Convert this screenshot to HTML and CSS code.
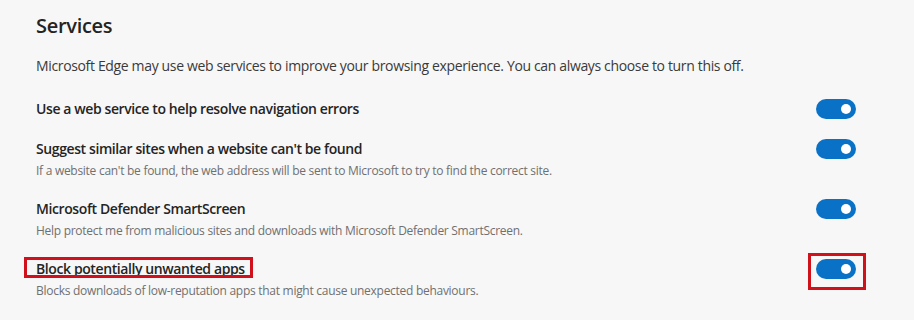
FILE: index.html
```html
<!DOCTYPE html>
<html lang="en">
<head>
<meta charset="utf-8">
<title>Services</title>
<link rel="stylesheet" href="styles.css">
</head>
<body>
<main class="page">
  <h1 class="heading">Services</h1>
  <p class="intro">Microsoft Edge may use web services to improve your browsing experience. You can always choose to turn this off.</p>

  <div class="row">
    <div class="text">
      <div class="title">Use a web service to help resolve navigation errors</div>
    </div>
    <span class="toggle"><span class="knob"></span></span>
  </div>

  <div class="row">
    <div class="text">
      <div class="title">Suggest similar sites when a website can't be found</div>
      <div class="desc">If a website can't be found, the web address will be sent to Microsoft to try to find the correct site.</div>
    </div>
    <span class="toggle"><span class="knob"></span></span>
  </div>

  <div class="row">
    <div class="text">
      <div class="title">Microsoft Defender SmartScreen</div>
      <div class="desc">Help protect me from malicious sites and downloads with Microsoft Defender SmartScreen.</div>
    </div>
    <span class="toggle"><span class="knob"></span></span>
  </div>

  <div class="row">
    <div class="text">
      <div class="title"><span class="mark mark-title">Block potentially unwanted apps</span></div>
      <div class="desc">Blocks downloads of low-reputation apps that might cause unexpected behaviours.</div>
    </div>
    <span class="toggle mark mark-toggle"><span class="knob"></span></span>
  </div>
</main>
</body>
</html>
```

FILE: styles.css
```css
html, body {
  margin: 0;
  padding: 0;
  background: #f7f7f7;
}

body {
  font-family: "Open Sans", "Noto Sans", sans-serif;
  color: #242424;
  width: 914px;
  height: 320px;
  overflow: hidden;
}

.page {
  padding: 12px 58px 0 36px;
}

.heading {
  margin: 0;
  font-size: 20px;
  line-height: 28px;
  font-weight: 600;
  color: #242424;
  letter-spacing: -0.3px;
}

.intro {
  margin: 16px 0 13px;
  font-size: 14px;
  line-height: 20px;
  color: #3a3a3a;
  letter-spacing: -0.35px;
}

.row {
  display: flex;
  justify-content: space-between;
  align-items: flex-start;
  padding: 10px 0 10px;
}

.row:has(.desc) {
  padding-bottom: 7px;
}

.title {
  font-size: 14px;
  line-height: 20px;
  font-weight: 600;
  color: #242424;
  letter-spacing: -0.4px;
}

.desc {
  margin-top: 1px;
  font-size: 12px;
  line-height: 22px;
  color: #707070;
  letter-spacing: -0.28px;
}

.toggle {
  position: relative;
  display: flex;
  align-items: center;
  justify-content: flex-end;
  width: 40px;
  height: 20px;
  box-sizing: border-box;
  padding-right: 5px;
  border-radius: 10px;
  background: #0a72c6;
  flex: none;
}

.knob {
  width: 10px;
  height: 10px;
  border-radius: 50%;
  background: #ffffff;
}

.mark {
  position: relative;
}

.mark::after {
  content: "";
  position: absolute;
  border: 3px solid #d0101a;
  pointer-events: none;
}

.mark-title::after {
  left: -12px;
  right: -8px;
  top: -2px;
  bottom: 0;
}

.mark-toggle::after {
  left: -8px;
  right: -10px;
  top: -6px;
  bottom: -11px;
}
```
